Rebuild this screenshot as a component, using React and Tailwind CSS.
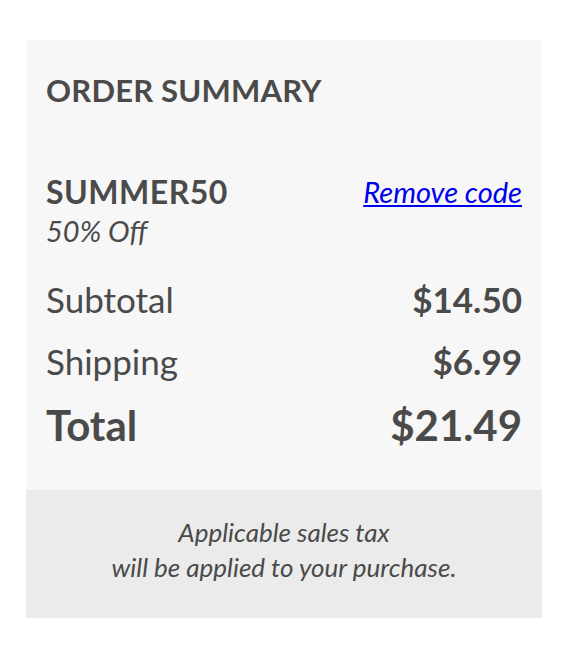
export default function App() {
  return (
    <div className="min-h-screen bg-white pt-[40px] pl-[26px]" style={{ fontFamily: "Lato, 'Noto Sans', sans-serif" }}>
      <div className="w-[516px] bg-[#f7f7f7] text-[#4a4a4a]">
        <div className="px-5 pt-[30px] pb-[32px]">
          <h2 className="text-[31px] font-bold leading-[40px] tracking-[0.2px]">ORDER SUMMARY</h2>
          <div className="mt-[64px] flex items-start justify-between">
            <div className="text-[32px] font-bold leading-[36px] tracking-[0.5px]">SUMMER50</div>
            <a href="#" className="text-[29px] italic leading-[36px] text-[#0000ee] underline">Remove code</a>
          </div>
          <div className="text-[29px] italic leading-[42px]">50% Off</div>
          <div className="mt-[16px] flex items-center justify-between text-[35px] leading-[62px]">
            <span>Subtotal</span>
            <span className="font-bold">$14.50</span>
          </div>
          <div className="flex items-center justify-between text-[35px] leading-[62px]">
            <span>Shipping</span>
            <span className="font-bold">$6.99</span>
          </div>
          <div className="flex items-center justify-between text-[42px] font-bold leading-[66px]">
            <span>Total</span>
            <span>$21.49</span>
          </div>
        </div>
        <div className="bg-[#ebebeb] pt-[25px] pb-[33px] text-center text-[26px] italic leading-[35px]">
          <p>Applicable sales tax</p>
          <p>will be applied to your purchase.</p>
        </div>
      </div>
    </div>
  );
}
